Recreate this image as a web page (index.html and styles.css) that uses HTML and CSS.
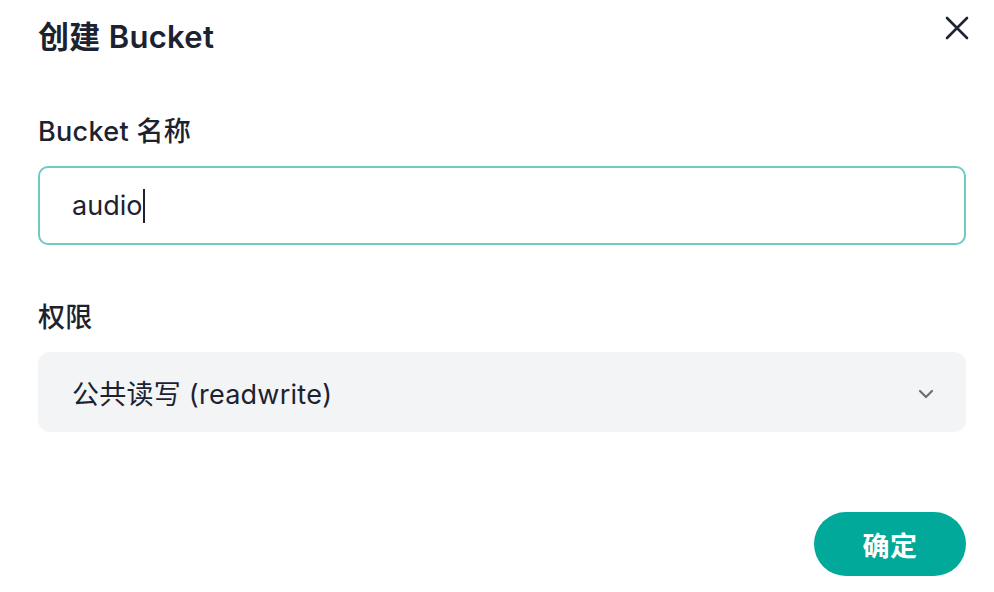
FILE: index.html
```html
<!DOCTYPE html>
<html lang="zh">
<head>
<meta charset="utf-8">
<link rel="stylesheet" href="styles.css">
</head>
<body>
<div class="dialog">
  <div class="header">
    <h1 class="title">创建 Bucket</h1>
    <button class="close" aria-label="关闭">
      <svg width="24" height="24" viewBox="0 0 24 24"><path d="M2 2 L22 22 M22 2 L2 22" stroke="#1f2433" stroke-width="2.6" stroke-linecap="round"/></svg>
    </button>
  </div>
  <div class="field">
    <label class="label">Bucket 名称</label>
    <div class="input"><span>audio</span><span class="caret"></span></div>
  </div>
  <div class="field field-2">
    <label class="label">权限</label>
    <div class="select">
      <span>公共读写 (readwrite)</span>
      <svg class="chev" width="16" height="10" viewBox="0 0 16 10"><path d="M2 2 L8 8 L14 2" fill="none" stroke="#6b6f78" stroke-width="2.2" stroke-linecap="round" stroke-linejoin="round"/></svg>
    </div>
  </div>
  <div class="footer">
    <button class="ok">确定</button>
  </div>
</div>
</body>
</html>
```
FILE: styles.css
```css
html, body {
  margin: 0;
  padding: 0;
  background: #ffffff;
}
body {
  font-family: "Inter", "Noto Sans CJK SC", sans-serif;
  color: #1c2230;
}
.dialog {
  width: 994px;
  height: 592px;
  box-sizing: border-box;
  padding: 14px 28px 16px 38px;
  display: flex;
  flex-direction: column;
}
.header {
  display: flex;
  justify-content: space-between;
  align-items: flex-start;
}
.title {
  margin: 0;
  font-size: 31px;
  font-weight: 600;
  line-height: 46px;
  letter-spacing: 0.3px;
}
.close {
  border: 0;
  background: none;
  padding: 0;
  margin: -1px -6px 0 0;
  width: 30px;
  height: 30px;
  display: flex;
  align-items: center;
  justify-content: center;
}
.field {
  display: flex;
  flex-direction: column;
  margin-top: 54px;
}
.field-2 {
  margin-top: 55px;
}
.label {
  font-size: 27px;
  font-weight: 500;
  line-height: 36px;
  margin-bottom: 16px;
  letter-spacing: 0.3px;
}
.input {
  height: 79px;
  box-sizing: border-box;
  border: 2px solid #6ccbc3;
  border-radius: 10px;
  padding: 0 32px;
  display: flex;
  align-items: center;
  font-size: 27px;
  color: #1c2230;
}
.caret {
  display: inline-block;
  width: 2px;
  height: 34px;
  background: #1c2230;
  margin-left: 1px;
}
.select {
  height: 80px;
  box-sizing: border-box;
  background: #f3f4f6;
  border-radius: 12px;
  padding: 0 32px 0 34px;
  display: flex;
  align-items: center;
  justify-content: space-between;
  font-size: 27px;
  letter-spacing: 0.25px;
  color: #1c2230;
}
.chev {
  margin-top: 4px;
}
.footer {
  margin-top: auto;
  display: flex;
  justify-content: flex-end;
}
.ok {
  width: 152px;
  height: 64px;
  border: 0;
  border-radius: 32px;
  background: #00a99a;
  color: #ffffff;
  font-family: "Inter", "Noto Sans CJK SC", sans-serif;
  font-size: 27px;
  font-weight: 700;
  letter-spacing: 0.5px;
}
```
